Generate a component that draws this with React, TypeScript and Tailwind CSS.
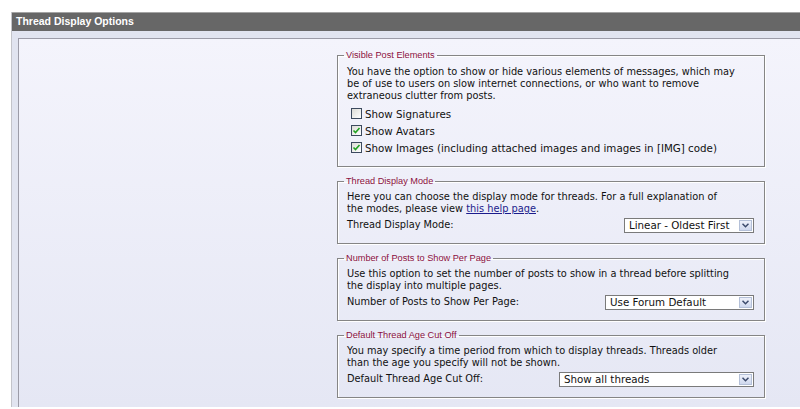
import type { ReactNode } from "react";

const body = { fontFamily: '"DejaVu Sans", Verdana, sans-serif' };
const legendFont = { fontFamily: '"Liberation Sans", Tahoma, Arial, sans-serif' };

function Box({ title, children }: { title: string; children: ReactNode }) {
  return (
    <fieldset className="border border-[#858585] shadow-[inset_1px_1px_0_#ffffff,1px_1px_0_#ffffff] px-[9px] pr-[10px] pb-[10px]">
      <legend
        className="-ml-[3px] px-[2px] text-[9.2px] leading-[12px] text-[#8b1040]"
        style={legendFont}
      >
        {title}
      </legend>
      {children}
    </fieldset>
  );
}

function Check({ checked, label }: { checked: boolean; label: string }) {
  return (
    <div className="flex items-center h-[17px] pl-[4px] gap-[3px] whitespace-nowrap text-[10.3px]">
      <span className="w-[11px] h-[11px] shrink-0 border border-[#3c4a5e] bg-gradient-to-br from-[#dcdcd6] to-white flex items-center justify-center">
        {checked && (
          <svg width="9" height="9" viewBox="0 0 9 9">
            <path d="M1.5 4.5 L3.5 6.5 L7.5 2" fill="none" stroke="#21a121" strokeWidth="1.6" />
          </svg>
        )}
      </span>
      <span>{label}</span>
    </div>
  );
}

function Select({ value, width }: { value: string; width: string }) {
  return (
    <div className={`${width} h-[15px] shrink-0 border border-[#7a7a7a] bg-white flex items-center justify-between pl-[4px] pr-[1px]`}>
      <span className="leading-[13px] whitespace-nowrap text-[10.3px]">{value}</span>
      <span className="w-[13px] h-[11px] border border-[#b4c0d8] bg-gradient-to-b from-[#eef1fa] to-[#cfd8ee] flex items-center justify-center">
        <svg width="7" height="5" viewBox="0 0 7 5">
          <path d="M0.5 0.8 L3.5 3.8 L6.5 0.8" fill="none" stroke="#3b4a6b" strokeWidth="1.5" />
        </svg>
      </span>
    </div>
  );
}

function SelectRow({ label, value, width }: { label: string; value: string; width: string }) {
  return (
    <div className="flex items-center justify-between h-[16px] mt-[2px]">
      <span className="whitespace-nowrap">{label}</span>
      <Select value={value} width={width} />
    </div>
  );
}

export default function App() {
  return (
    <div className="h-[409px] w-[800px] overflow-hidden bg-white pt-[12px] pl-[11px]">
      <div className="w-[900px] h-[395px] border-l border-[#c3c4ca] flex flex-col">
        {/* Header */}
        <div
          className="h-[19px] bg-[#676767] border-t border-[#a4a4a4] flex items-center px-[4px] text-[10.5px] font-bold text-white"
          style={legendFont}
        >
          Thread Display Options
        </div>

        <div className="flex-1 bg-[#e1e4f0] pt-[7px] pl-[6px] flex">
          <div
            className="flex-1 border-t border-l border-[#9c9ca8] bg-gradient-to-b from-[#f4f4fc] to-[#e5e7f4] pt-[10px] text-[9.8px] leading-[12px] text-[#111]"
            style={body}
          >
            <div className="grid grid-cols-[318px_428px]">
              <div />
              <div className="flex flex-col gap-[8px]">
                <Box title="Visible Post Elements">
                  <div className="pt-[5px]">
                    <p className="whitespace-nowrap">
                      You have the option to show or hide various elements of messages, which may
                      <br />
                      be of use to users on slow internet connections, or who want to remove
                      <br />
                      extraneous clutter from posts.
                    </p>
                    <div className="mt-[3px]">
                      <Check checked={false} label="Show Signatures" />
                      <Check checked label="Show Avatars" />
                      <Check checked label="Show Images (including attached images and images in [IMG] code)" />
                    </div>
                  </div>
                </Box>

                <Box title="Thread Display Mode">
                  <div className="pt-[4px]">
                    <p className="whitespace-nowrap">
                      Here you can choose the display mode for threads. For a full explanation of
                      <br />
                      the modes, please view{" "}
                      <a href="#" className="underline text-[#1c1c8c]">
                        this help page
                      </a>
                      .
                    </p>
                    <SelectRow label="Thread Display Mode:" value="Linear - Oldest First" width="w-[130px]" />
                  </div>
                </Box>

                <Box title="Number of Posts to Show Per Page">
                  <div className="pt-[4px]">
                    <p className="whitespace-nowrap">
                      Use this option to set the number of posts to show in a thread before splitting
                      <br />
                      the display into multiple pages.
                    </p>
                    <SelectRow label="Number of Posts to Show Per Page:" value="Use Forum Default" width="w-[149px]" />
                  </div>
                </Box>

                <Box title="Default Thread Age Cut Off">
                  <div className="pt-[4px]">
                    <p className="whitespace-nowrap">
                      You may specify a time period from which to display threads. Threads older
                      <br />
                      than the age you specify will not be shown.
                    </p>
                    <SelectRow label="Default Thread Age Cut Off:" value="Show all threads" width="w-[195px]" />
                  </div>
                </Box>
              </div>
            </div>
          </div>
        </div>
      </div>
    </div>
  );
}
